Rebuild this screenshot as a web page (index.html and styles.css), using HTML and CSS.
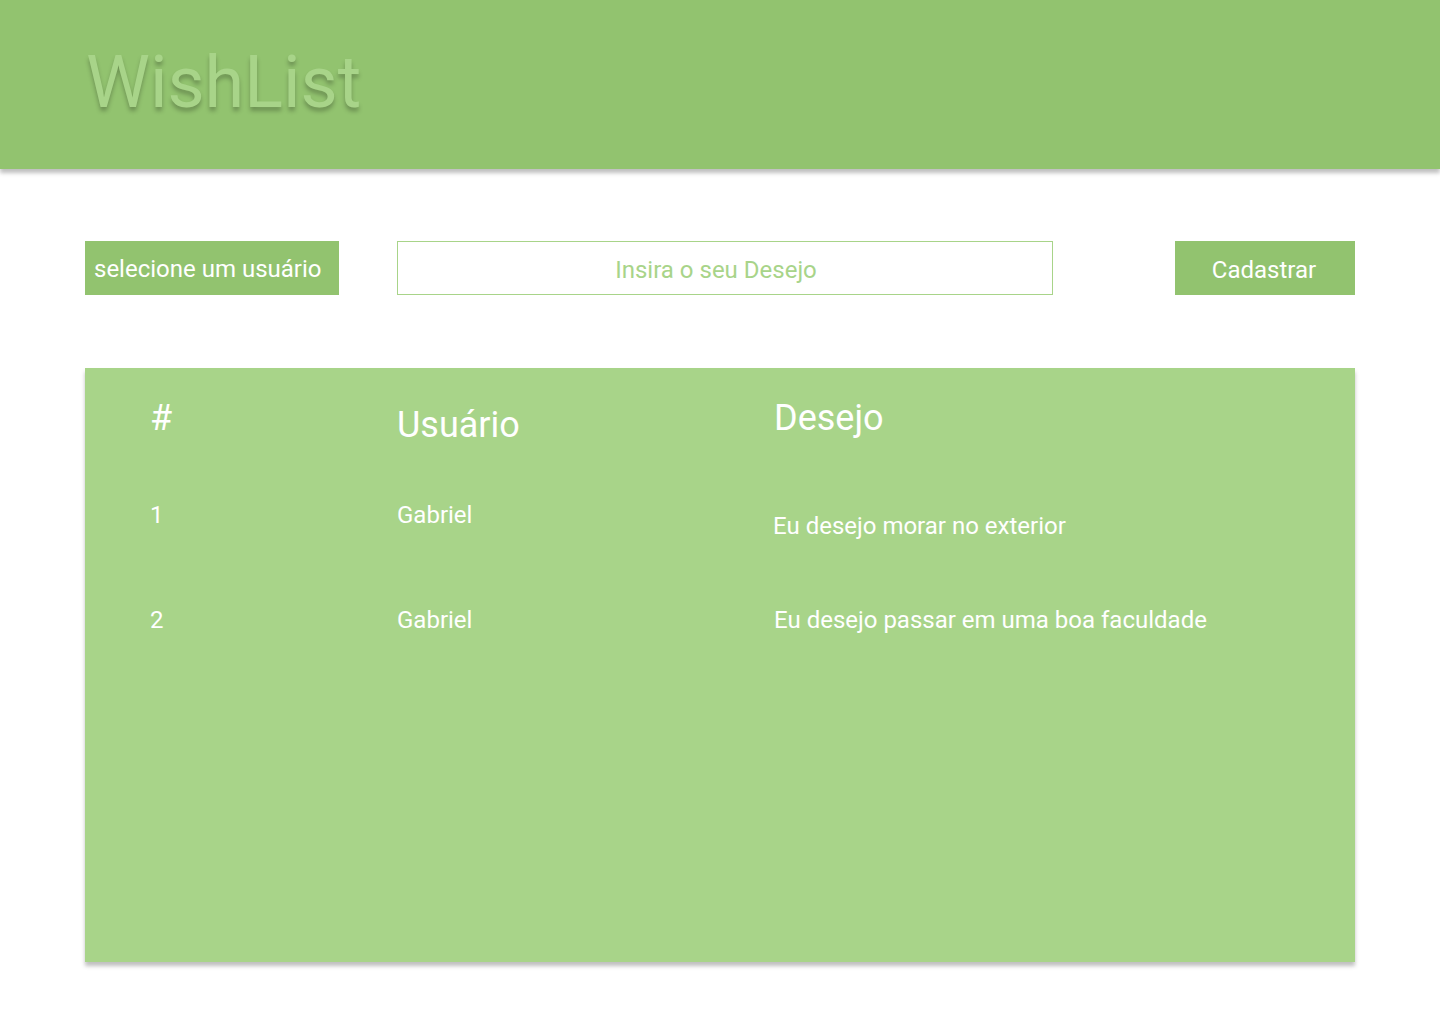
FILE: index.html
```html
<!DOCTYPE html>
<html lang="pt-BR">
<head>
<meta charset="utf-8">
<title>WishList</title>
<link rel="stylesheet" href="styles.css">
</head>
<body>
<header class="topbar">
  <h1 class="brand">WishList</h1>
</header>
<main class="content">
  <form class="controls">
    <div class="select">selecione um usuário</div>
    <input class="wish-input" type="text" placeholder="Insira o seu Desejo">
    <button class="submit" type="button">Cadastrar</button>
  </form>
  <section class="table">
    <div class="row head">
      <div class="cell">#</div>
      <div class="cell user-h">Usuário</div>
      <div class="cell">Desejo</div>
    </div>
    <div class="row body first">
      <div class="cell">1</div>
      <div class="cell">Gabriel</div>
      <div class="cell wish-1">Eu desejo morar no exterior</div>
    </div>
    <div class="row body">
      <div class="cell">2</div>
      <div class="cell">Gabriel</div>
      <div class="cell">Eu desejo passar em uma boa faculdade</div>
    </div>
  </section>
</main>
</body>
</html>
```
FILE: styles.css
```css
* { box-sizing: border-box; }
html, body { margin: 0; padding: 0; }
body {
  font-family: Roboto, "Liberation Sans", sans-serif;
  background: #ffffff;
  width: 1440px;
  min-height: 1024px;
}
.topbar {
  height: 169px;
  background: #92c36f;
  box-shadow: 0 4px 4px rgba(0, 0, 0, 0.25);
  padding: 40px 0 0 86px;
  position: relative;
  z-index: 1;
}
.brand {
  margin: 0;
  font-weight: 400;
  font-size: 72px;
  line-height: normal;
  color: #a8d489;
  text-shadow: 0 4px 4px rgba(0, 0, 0, 0.25);
}
.content {
  padding: 72px 85px 0 85px;
}
.controls {
  display: flex;
  align-items: stretch;
  height: 54px;
  margin: 0;
}
.select {
  width: 254px;
  background: #92c36f;
  color: #ffffff;
  font-size: 24px;
  display: flex;
  align-items: center;
  padding: 1px 0 0 9px;
}
.wish-input {
  width: 656px;
  margin-left: 58px;
  border: 1px solid #a8d489;
  background: #ffffff;
  font-family: inherit;
  font-size: 24px;
  text-align: center;
  color: #a8d489;
  outline: none;
  padding: 4px 18px 0 0;
}
.wish-input::placeholder { color: #a8d489; opacity: 1; }
.submit {
  margin-left: auto;
  width: 180px;
  border: none;
  background: #92c36f;
  color: #ffffff;
  font-family: inherit;
  font-size: 24px;
  padding: 4px 2px 0 0;
}
.table {
  margin-top: 73px;
  height: 594px;
  background: #a8d489;
  box-shadow: 0 4px 4px rgba(0, 0, 0, 0.25);
  padding-left: 65px;
  color: #ffffff;
}
.row {
  display: grid;
  grid-template-columns: 247px 377px 1fr;
  align-items: start;
}
.head {
  height: 133px;
  padding-top: 29px;
  font-size: 36px;
}
.user-h { margin-top: 7px; }
.body {
  font-size: 24px;
  height: 105px;
}
.wish-1 { margin-top: 11px; margin-left: -1px; }
```
